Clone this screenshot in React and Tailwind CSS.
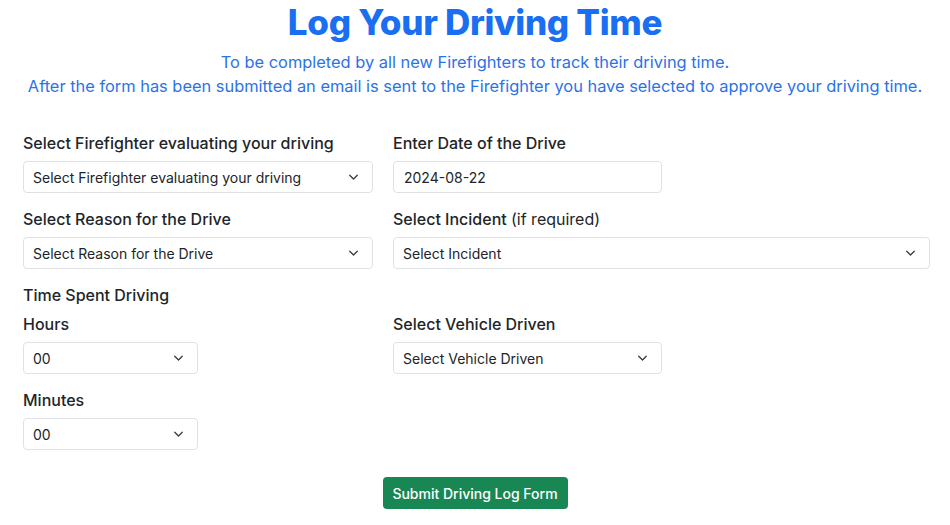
import { useState } from "react";

const font = { fontFamily: "Inter, 'Noto Sans', sans-serif" };

function Chevron() {
  return (
    <svg viewBox="0 0 16 16" className="pointer-events-none absolute right-[14px] top-1/2 h-[11px] w-[11px] -translate-y-1/2" fill="none" stroke="#343a40" strokeWidth="1.8" strokeLinecap="round" strokeLinejoin="round">
      <path d="m2.5 5.5 5.5 5.5 5.5-5.5" />
    </svg>
  );
}

function Select({ value, width, options = [], onChange }) {
  return (
    <div className={`relative ${width}`}>
      <select
        value={value}
        onChange={(e) => onChange?.(e.target.value)}
        className="h-[32px] w-full appearance-none rounded-[4px] border border-[#dee2e6] bg-white pl-[9px] pr-8 text-[14px] text-[#212529] outline-none"
      >
        <option value={value}>{value}</option>
        {options.filter((o) => o !== value).map((o) => (
          <option key={o} value={o}>{o}</option>
        ))}
      </select>
      <Chevron />
    </div>
  );
}

function Label({ children }) {
  return <label className="mb-[6px] block text-[16px] font-medium leading-6 text-[#212529]">{children}</label>;
}

export default function App() {
  const [date, setDate] = useState("2024-08-22");
  const [hours, setHours] = useState("00");
  const [minutes, setMinutes] = useState("00");

  return (
    <div className="min-h-screen bg-white pt-[2px]" style={font}>
      <h1 className="text-center text-[35px] font-extrabold leading-[40px] tracking-[-0.3px] text-[#1a6ef2]">Log Your Driving Time</h1>
      <div className="mt-[8px] text-center text-[16.4px] leading-6 text-[#2b72e8]">
        <p>To be completed by all new Firefighters to track their driving time.</p>
        <p>After the form has been submitted an email is sent to the Firefighter you have selected to approve your driving time.</p>
      </div>

      <form className="mt-[33px] pl-[23px]" onSubmit={(e) => e.preventDefault()}>
        <div className="grid grid-cols-[350px_537px] gap-x-5">
          <div className="mb-[14px]">
            <Label>Select Firefighter evaluating your driving</Label>
            <Select value="Select Firefighter evaluating your driving" width="w-[350px]" />
          </div>
          <div className="mb-[14px]">
            <Label>Enter Date of the Drive</Label>
            <input
              value={date}
              onChange={(e) => setDate(e.target.value)}
              className="h-[32px] w-[269px] rounded-[4px] border border-[#dee2e6] bg-white px-[10px] text-[14px] text-[#212529] outline-none"
            />
          </div>

          <div className="mb-[14px]">
            <Label>Select Reason for the Drive</Label>
            <Select value="Select Reason for the Drive" width="w-[350px]" />
          </div>
          <div className="mb-[14px]">
            <Label>
              Select Incident <span className="font-normal">(if required)</span>
            </Label>
            <Select value="Select Incident" width="w-[537px]" />
          </div>

          <div className="col-span-2 mb-[5px] text-[16px] font-medium leading-6 text-[#212529]">Time Spent Driving</div>

          <div className="mb-[14px]">
            <Label>Hours</Label>
            <Select value={hours} onChange={setHours} options={["00", "01", "02", "03", "04", "05"]} width="w-[175px]" />
          </div>
          <div className="mb-[14px]">
            <Label>Select Vehicle Driven</Label>
            <Select value="Select Vehicle Driven" width="w-[269px]" />
          </div>

          <div>
            <Label>Minutes</Label>
            <Select value={minutes} onChange={setMinutes} options={["00", "15", "30", "45"]} width="w-[175px]" />
          </div>
        </div>

        <div className="mt-[27px] flex justify-center pr-[23px]">
          <button type="submit" className="h-[32px] w-[185px] rounded-[4px] bg-[#198754] text-[14px] font-medium text-white">
            Submit Driving Log Form
          </button>
        </div>
      </form>
    </div>
  );
}
